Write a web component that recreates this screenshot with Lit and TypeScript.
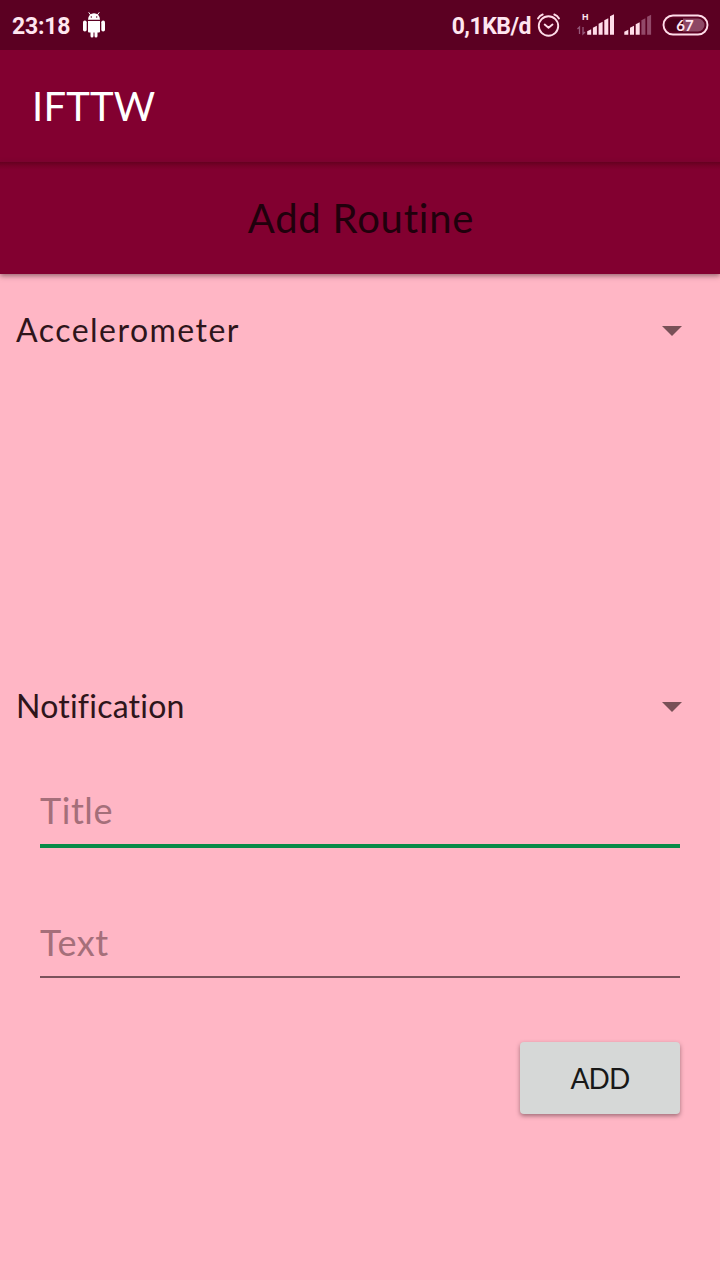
import { LitElement, html, svg, css } from "lit";
import { customElement, property } from "lit/decorators.js";

@customElement("status-bar")
class StatusBar extends LitElement {
  static styles = css`
    :host { display: flex; height: 50px; background: #5b0022; color: #ffe6f0; align-items: center; padding: 0 12px 0 12px; box-sizing: border-box; font: 700 23px/50px Roboto, sans-serif; }
    .clock { width: 70px; padding-top: 4px; letter-spacing: -0.200px; }
    .rate { margin: 0 5px 0 auto; padding-top: 4px; letter-spacing: -0.500px; }
    svg { display: block; flex: none; }
    .network { font: 700 9px "Liberation Sans", sans-serif; }
    .level { font: 700 15px Lato, sans-serif; }
    .right { width: 184px; margin-right: -12px; }
  `;
  render() {
    return html`
      <span class="clock">23:18</span>
      <svg width="26" height="50" viewBox="82 0 26 50" fill="#fff">
        <path d="M88 19.700a6 6.500 0 0 1 12 0z" />
        <path d="M88.700 12.300l2 2.700M99.300 12.300l-2 2.700" stroke="#fff" stroke-width="1" />
        <circle cx="91.300" cy="17" r=".7" fill="#5b0022" /><circle cx="96.700" cy="17" r=".7" fill="#5b0022" />
        <path d="M88 21h12v10.500q0 1-1 1h-1.500v3.500a1.500 1.500 0 0 1-3 0v-3.500h-1v3.500a1.500 1.500 0 0 1-3 0v-3.500H89q-1 0-1-1z" />
        <rect x="83" y="20.500" width="3.700" height="11" rx="1.800" /><rect x="101.300" y="20.500" width="3.700" height="11" rx="1.800" />
      </svg>
      <span class="rate">0,1KB/d</span>
      <svg class="right" width="184" height="50" viewBox="536 0 184 50" fill="none">
        <g stroke="#ffdce9" stroke-width="1.900" stroke-linecap="round" stroke-linejoin="round">
          <circle cx="548.500" cy="26" r="9.700" />
          <path d="M544.700 24.500l3.800 3.200 4-3.200M538 18.500q1.600-3 4.700-4M559 18.500q-1.600-3-4.700-4" />
        </g>
        <text class="network" x="582" y="20" fill="#ffe6f0">H</text>
        <g stroke="#96587a" stroke-width="1.300"><path d="M579.500 34v-7l-2 2M583 27v7l2-2" /></g>
        ${[0, 1, 2, 3, 4].map((i) => svg`<path fill="#ffdce9" d=${`M${587.2 + i * 5.7} 34.800v${-[3.5, 7, 11, 14.500, 18.500][i]}l4-2v${[5.5, 9, 13, 16.500, 20.500][i]}z`} />`)}
        ${[0, 1, 2, 3, 4].map((i) => svg`<path fill=${i < 3 ? "#ffdce9" : "#924969"} d=${`M${624.3 + i * 5.7} 34.800v${-[3, 7, 10.500, 14.500, 18][i]}l4-2v${[5, 9, 12.500, 16.500, 20][i]}z`} />`)}
        <rect x="666" y="18.500" width="38.500" height="13" rx="6.500" fill="#480019" />
        <path d="M683 18.500h15a6.500 6.500 0 0 1 0 13h-15z" fill="#8d4865" />
        <rect x="663.500" y="15.500" width="44" height="19" rx="9.500" stroke="#ffdce9" stroke-width="1.900" />
        <text class="level" x="685" y="30.500" text-anchor="middle" fill="#ffe6f0">67</text>
      </svg>`;
  }
}

@customElement("spinner-row")
class SpinnerRow extends LitElement {
  @property() label = "";
  static styles = css`
    :host { display: flex; align-items: center; justify-content: space-between; height: 48px; padding: 0 38px 0 16px; }
    span { font: 400 32px/48px Lato, sans-serif; color: #2e151b; }
    .a { letter-spacing: 1.480px; }
    .n { letter-spacing: 0.220px; }
    svg { display: block; margin-top: 2px; }
  `;
  render() {
    return html`<span class=${this.label[0].toLowerCase()}>${this.label}</span>
      <svg width="20" height="10" viewBox="0 0 20 10"><path d="M0 0h20L10 10z" fill="#785057" /></svg>`;
  }
}

@customElement("app-root")
class AppRoot extends LitElement {
  static styles = css`
    :host { display: flex; flex-direction: column; height: 1280px; width: 720px; background: #ffb6c5; font-family: Lato, sans-serif; overflow: hidden; }
    .bar { height: 112px; box-sizing: border-box; background: #820030; line-height: 112px; font-size: 40px; }
    .app { padding-left: 32px; color: #fff; font-weight: 400; }
    .name { letter-spacing: 0.200px; }
    .caption { letter-spacing: 0.800px; font-variant-ligatures: none; }
    .heading { padding-left: 2px; text-align: center; color: #20000c; background: linear-gradient(#65001f, #780029 4px, #820030 8px); box-shadow: 0 2px 5px rgba(70, 40, 45, 0.55); }
    .first { margin-top: 32px; }
    .second { margin-top: 328px; }
    .field { margin: 0 40px; box-sizing: border-box; color: #a56f7a; font-size: 36px; font-weight: 400; letter-spacing: 0.550px; }
    .title { margin-top: 40px; height: 78px; line-height: 80px; border-bottom: 4px solid #078b48; }
    .text { margin-top: 52px; height: 78px; line-height: 84px; border-bottom: 2px solid #7a525b; }
    button { align-self: flex-end; margin: 64px 40px 0 0; width: 160px; height: 72px; padding: 0; border: 0; border-radius: 4px; background: #d6d8d7; color: #181818; font: 400 28px/72px Lato, sans-serif; letter-spacing: -0.800px; box-shadow: 0 2px 4px rgba(70, 40, 45, 0.5); }
  `;
  render() {
    return html`
      <status-bar></status-bar>
      <div class="bar app"><span class="name">IFTTW</span></div>
      <div class="bar heading"><span class="caption">Add Routine</span></div>
      <spinner-row class="first" label="Accelerometer"></spinner-row>
      <spinner-row class="second" label="Notification"></spinner-row>
      <div class="field title"><span>Title</span></div>
      <div class="field text"><span>Text</span></div>
      <button>ADD</button>`;
  }
}
